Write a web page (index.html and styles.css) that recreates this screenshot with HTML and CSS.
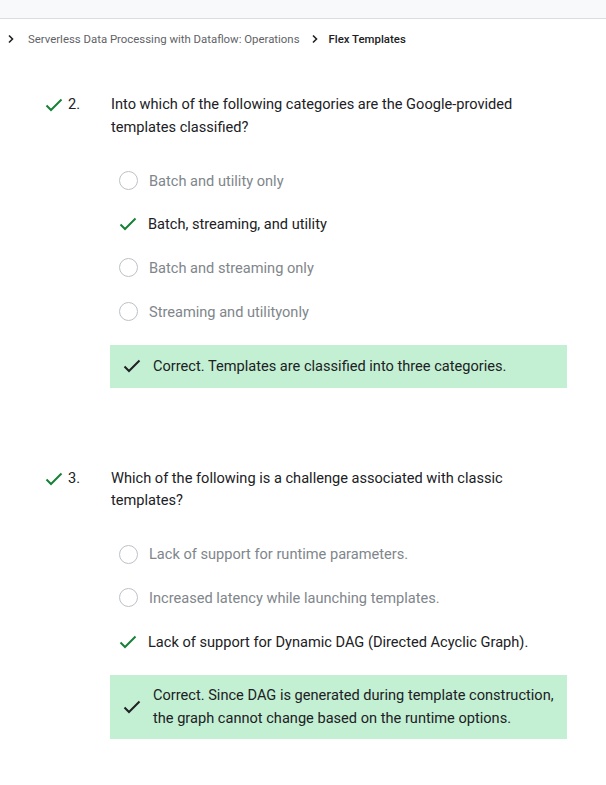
FILE: index.html
```html
<!DOCTYPE html>
<html>
<head>
<meta charset="utf-8">
<link rel="stylesheet" href="styles.css">
</head>
<body>
<div class="topbar"></div>
<nav class="crumbs">
  <svg class="chev" viewBox="0 0 8 10" width="8" height="10"><path d="M2 1.5 L5.5 5 L2 8.5" fill="none" stroke="#202124" stroke-width="1.6"/></svg>
  <span class="crumb-link">Serverless Data Processing with Dataflow: Operations</span>
  <svg class="chev" viewBox="0 0 8 10" width="8" height="10"><path d="M2 1.5 L5.5 5 L2 8.5" fill="none" stroke="#202124" stroke-width="1.6"/></svg>
  <span class="crumb-current">Flex Templates</span>
</nav>

<main class="quiz">
  <section class="question">
    <div class="q-head">
      <svg class="q-check" viewBox="0 0 18 14" width="18" height="14"><path d="M1.5 7.5 L6 12 L16.5 1.5" fill="none" stroke="#188038" stroke-width="2"/></svg>
      <span class="q-num">2.</span>
      <p class="q-text">Into which of the following categories are the Google-provided templates classified?</p>
    </div>
    <ul class="options">
      <li class="opt"><span class="radio"></span><span>Batch and utility only</span></li>
      <li class="opt sel"><svg class="opt-check" viewBox="0 0 18 14" width="18" height="14"><path d="M1.5 7.5 L6 12 L16.5 1.5" fill="none" stroke="#188038" stroke-width="2"/></svg><span>Batch, streaming, and utility</span></li>
      <li class="opt"><span class="radio"></span><span>Batch and streaming only</span></li>
      <li class="opt"><span class="radio"></span><span>Streaming and utilityonly</span></li>
    </ul>
    <div class="feedback">
      <svg class="fb-check" viewBox="0 0 18 14" width="18" height="14"><path d="M1.5 7.5 L6 12 L16.5 1.5" fill="none" stroke="#202124" stroke-width="2"/></svg>
      <p>Correct. Templates are classified into three categories.</p>
    </div>
  </section>

  <section class="question">
    <div class="q-head">
      <svg class="q-check" viewBox="0 0 18 14" width="18" height="14"><path d="M1.5 7.5 L6 12 L16.5 1.5" fill="none" stroke="#188038" stroke-width="2"/></svg>
      <span class="q-num">3.</span>
      <p class="q-text">Which of the following is a challenge associated with classic templates?</p>
    </div>
    <ul class="options">
      <li class="opt"><span class="radio"></span><span>Lack of support for runtime parameters.</span></li>
      <li class="opt"><span class="radio"></span><span>Increased latency while launching templates.</span></li>
      <li class="opt sel"><svg class="opt-check" viewBox="0 0 18 14" width="18" height="14"><path d="M1.5 7.5 L6 12 L16.5 1.5" fill="none" stroke="#188038" stroke-width="2"/></svg><span>Lack of support for Dynamic DAG (Directed Acyclic Graph).</span></li>
    </ul>
    <div class="feedback">
      <svg class="fb-check" viewBox="0 0 18 14" width="18" height="14"><path d="M1.5 7.5 L6 12 L16.5 1.5" fill="none" stroke="#202124" stroke-width="2"/></svg>
      <p>Correct. Since DAG is generated during template construction, the graph cannot change based on the runtime options.</p>
    </div>
  </section>
</main>
</body>
</html>
```

FILE: styles.css
```css
* { box-sizing: border-box; }
html, body { margin: 0; padding: 0; background: #fff; }
body {
  font-family: Roboto, "Liberation Sans", sans-serif;
  color: #202124;
  width: 606px;
}
.topbar {
  height: 19px;
  background: #f8f9fa;
  border-bottom: 1px solid #dadce0;
}
.crumbs {
  height: 40px;
  display: flex;
  align-items: center;
  padding-left: 7px;
  font-size: 11.4px;
  line-height: 14px;
}
.chev { flex: none; }
.crumb-link { color: #5f6368; margin-left: 13px; margin-right: 11px; }
.crumb-current { color: #202124; font-weight: 500; margin-left: 10px; }

.quiz { padding: 34px 39px 0 45px; }
.question { margin-bottom: 79px; }
.q-head {
  display: flex;
  align-items: flex-start;
  font-size: 14.6px;
  line-height: 22.8px;
}
.q-check { flex: none; margin-top: 5px; }
.q-num { width: 43px; margin-left: 5px; flex: none; }
.q-text { margin: 0; width: 456px; }

.options {
  list-style: none;
  margin: 31px 0 0 0;
  padding: 0 0 0 74px;
  display: flex;
  flex-direction: column;
  gap: 21.7px;
}
.opt {
  display: flex;
  align-items: center;
  height: 22px;
  font-size: 14.6px;
  color: #80868b;
}
.opt.sel { color: #202124; }
.radio {
  width: 19px;
  height: 19px;
  border: 1.5px solid #bdc1c6;
  border-radius: 50%;
  margin-right: 11px;
  flex: none;
}
.opt-check { margin-right: 11px; flex: none; }

.feedback {
  margin: 22px 0 0 65px;
  width: 457px;
  min-height: 43px;
  background: #c3efd3;
  display: flex;
  align-items: center;
  padding: 9px 10px 9px 13px;
}
.fb-check { flex: none; margin-right: 12px; }
.feedback p { margin: 0; font-size: 14.6px; line-height: 23px; color: #202124; }
```
